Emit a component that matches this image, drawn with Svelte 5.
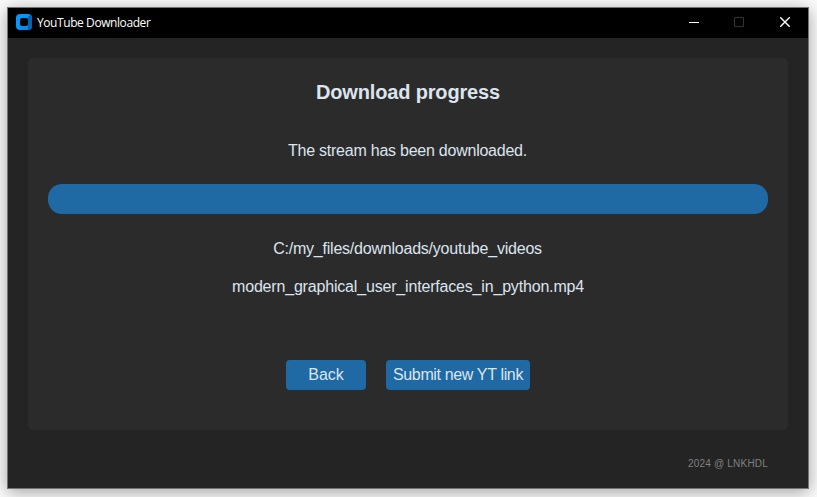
<script>
  const title = 'YouTube Downloader';
  const folder = 'C:/my_files/downloads/youtube_videos';
  const file = 'modern_graphical_user_interfaces_in_python.mp4';
</script>

<div class="desktop">
  <div class="window">
    <header>
      <svg class="logo" width="16" height="16" viewBox="0 0 16 16">
        <rect width="16" height="16" rx="4" fill="#0795f8" />
        <path d="M12 3 14 1a3.5 3.5 0 0 1 2 2.5V12a4 4 0 0 1-4 4h-1l1-4z" fill="#0563b1" />
        <path d="M4 12h7l1 1-1 3H4z" fill="#0a8cec" />
        <rect x="4" y="4" width="8" height="8" rx="2" fill="#000" />
      </svg>
      <span class="title">{title}</span>
      <div class="controls">
        <span class="control">
          <svg width="10" height="10" viewBox="0 0 10 10"><path d="M0 5.5h10" stroke="#fff" /></svg>
        </span>
        <span class="control">
          <svg width="10" height="10" viewBox="0 0 10 10"><path d="M.5.5h9v9h-9z" fill="none" stroke="#333" /></svg>
        </span>
        <span class="control">
          <svg width="10" height="10" viewBox="0 0 10 10"><path d="M.2.2l9.6 9.6M9.8.2L.2 9.8" stroke="#fff" stroke-width="1.4" /></svg>
        </span>
      </div>
    </header>
    <main>
      <section>
        <h1>Download progress</h1>
        <p class="status">The stream has been downloaded.</p>
        <div class="progress"></div>
        <p class="folder">{folder}</p>
        <p class="file">{file}</p>
        <div class="actions">
          <button class="back">Back</button>
          <button class="submit">Submit new YT link</button>
        </div>
      </section>
      <footer>2024 @ LNKHDL</footer>
    </main>
  </div>
</div>

<style>
  .desktop {
    box-sizing: border-box;
    width: 817px;
    height: 497px;
    padding: 7px 8px 8px 7px;
    background: #fbfbfb;
    overflow: hidden;
    font-family: 'Liberation Sans', Arial, sans-serif;
  }
  .window {
    box-sizing: border-box;
    height: 482px;
    border: 1px solid #747474;
    box-shadow: 0 3px 16px rgba(0, 0, 0, 0.36);
    display: flex;
    flex-direction: column;
    background: #242424;
  }
  header {
    height: 30px;
    flex: none;
    display: flex;
    align-items: center;
    background: #000;
    color: #fff;
  }
  .logo {
    margin: 0 5px 2px 8px;
  }
  .title {
    font: 12px/16px 'Open Sans', 'Noto Sans', sans-serif;
    letter-spacing: -0.42px;
  }
  .controls {
    display: flex;
    margin: 0 18px 2px auto;
    gap: 35px;
  }
  .control {
    display: flex;
  }
  .control:nth-child(2) {
    margin-right: 1px;
  }
  main {
    flex: 1;
    padding: 20px 20px 0;
    display: flex;
    flex-direction: column;
  }
  section {
    box-sizing: border-box;
    height: 372px;
    padding: 20px;
    border-radius: 5px;
    background: #2b2b2b;
    color: #dce4ee;
    display: flex;
    flex-direction: column;
    align-items: center;
  }
  h1,
  p {
    margin: 0;
    white-space: nowrap;
  }
  h1 {
    font-size: 20px;
    line-height: 28px;
    letter-spacing: -0.16px;
  }
  p {
    font-size: 16px;
    line-height: 28px;
  }
  .status {
    margin-top: 31px;
    padding-right: 1px;
    letter-spacing: -0.24px;
  }
  .progress {
    align-self: stretch;
    height: 30px;
    margin-top: 19px;
    border-radius: 14px;
    background: #1f6aa5;
  }
  .folder {
    margin-top: 21px;
    padding-right: 1px;
    letter-spacing: -0.22px;
  }
  .file {
    margin-top: 10px;
    letter-spacing: -0.18px;
  }
  .actions {
    display: flex;
    gap: 20px;
    margin-top: 59px;
  }
  button {
    height: 30px;
    padding: 0;
    border: 0;
    border-radius: 4px;
    background: #1f6aa5;
    color: #dce4ee;
    font: 16px/28px 'Liberation Sans', Arial, sans-serif;
    white-space: nowrap;
  }
  .back {
    width: 80px;
  }
  .submit {
    width: 144px;
    letter-spacing: -0.35px;
  }
  footer {
    align-self: flex-end;
    margin: 27px 20px 0 0;
    font-size: 10px;
    line-height: 14px;
    letter-spacing: 0.2px;
    color: #808080;
  }
</style>
